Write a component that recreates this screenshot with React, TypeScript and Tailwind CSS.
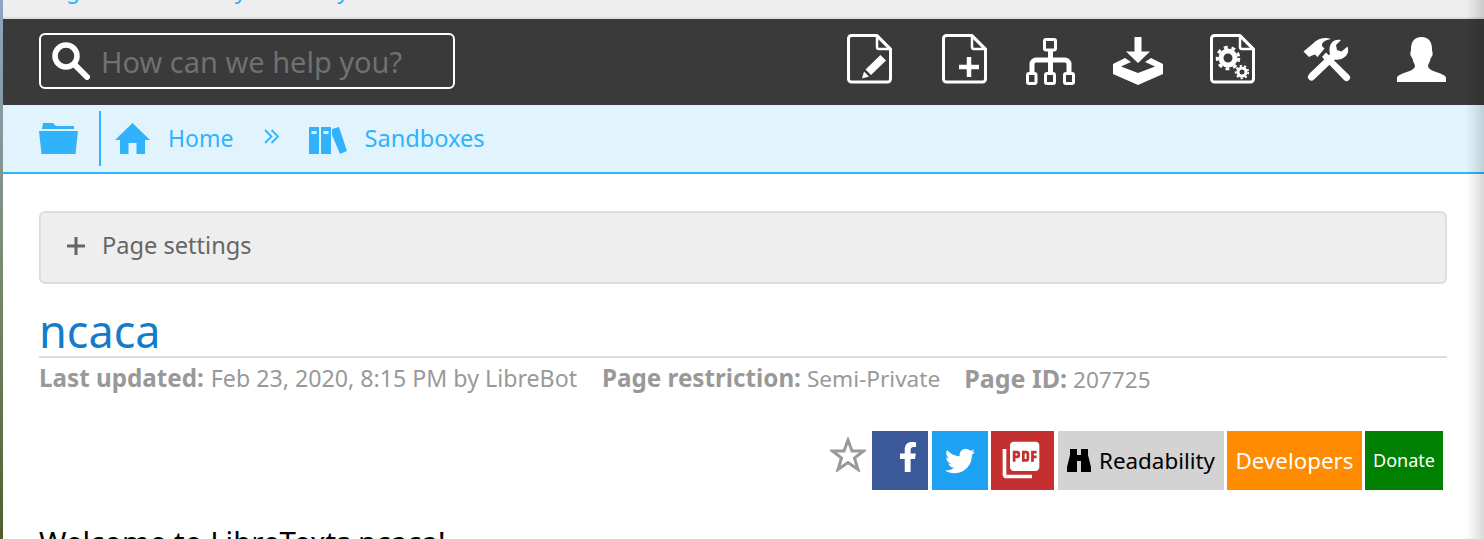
import React from 'react'
import { FaFacebookF, FaTwitter } from 'react-icons/fa'
import { MdPictureAsPdf } from 'react-icons/md'

const DocOutline = () => (
  <>
    <path d="M4 1.5H30L43.5 15V45a3 3 0 0 1-3 3H4.500a3 3 0 0 1-3-3V4.500a3 3 0 0 1 3-3Z" fill="none" stroke="#fff" strokeWidth="3" strokeLinejoin="round" />
    <path d="M30 2V13a2 2 0 0 0 2 2H43Z" fill="none" stroke="#fff" strokeWidth="2.500" strokeLinejoin="round" />
  </>
)

const DocPencil = () => (
  <svg width="45" height="50" viewBox="0 0 45 50">
    <DocOutline />
    <path d="M33.500 21L39 26.500 24 41 18.500 35.500Z" fill="#fff" />
    <path d="M17 37.500L22 42.500 15 44.500Z" fill="#fff" />
  </svg>
)

const DocPlus = () => (
  <svg width="45" height="50" viewBox="0 0 45 50">
    <DocOutline />
    <path d="M27 23V43M17 33H37" stroke="#fff" strokeWidth="4.500" fill="none" />
  </svg>
)

const Sitemap = () => (
  <svg width="49" height="47" viewBox="0 0 49 47" fill="none" stroke="#fff">
    <rect x="18.500" y="1.500" width="11" height="10.500" rx="1.500" strokeWidth="3" />
    <rect x="1.500" y="35.500" width="8.500" height="10" rx="1.500" strokeWidth="3" />
    <rect x="19.500" y="35.500" width="9" height="10" rx="1.500" strokeWidth="3" />
    <rect x="38.500" y="35.500" width="9" height="10" rx="1.500" strokeWidth="3" />
    <path d="M24.500 12V34M6 34V26a4 4 0 0 1 4-4H39a4 4 0 0 1 4 4V34" strokeWidth="5" />
  </svg>
)

const DownloadTray = () => (
  <svg width="50" height="48" viewBox="0 0 50 48" fill="#fff">
    <path d="M21.500 0H28.500V14.500H37L25 26 13 14.500H21.500Z" />
    <path d="M0 27L12 21 18 25 8 29.500 25 36 42 29.500 32 25 38 21 50 27V37L25 48 0 37Z" />
  </svg>
)

const Gear = ({ x, y, r, w }: { x: number; y: number; r: number; w: number }) => (
  <g fill="none" stroke="#fff">
    <circle cx={x} cy={y} r={r} strokeWidth={w} />
    <circle cx={x} cy={y} r={r + w * 0.75} strokeWidth={w * 0.6} strokeDasharray={`${r * 0.55} ${r * 0.55}`} />
  </g>
)

const DocGears = () => (
  <svg width="46" height="50" viewBox="0 0 46 50">
    <DocOutline />
    <Gear x={18} y={24} r={7} w={5} />
    <Gear x={32} y={38} r={4} w={3} />
  </svg>
)

const Tools = () => (
  <svg width="49" height="45" viewBox="0 0 49 45" fill="#fff">
    <path d="M19 20L23 15.500 46 38a3.500 3.500 0 0 1-5 5Z" />
    <path d="M0.500 14.500L10 6.500C15 1 23 0 28 2 22 3 18.500 5.500 19 9L21.500 11.500 14.500 20 12 17.500 9 18.500 6 20Z" />
    <path d="M6 37L27 17C25.500 11 27 6 31.500 3.500 33.500 2.500 36 2.500 38 3L33 8 34 13 38.500 14.500 44.500 9.500C46 14 45 18 41 20.500 38 22.500 35 23 32 22.500L11 42.500a3.500 3.500 0 0 1-5-5Z" />
  </svg>
)

const UserIcon = () => (
  <svg width="49" height="45" viewBox="0 0 49 45" fill="#fff">
    <path d="M24.500 0C32 0 35 5 35 12 35 15 36 15 35.500 18 35 20 34 20 33.500 22 33 25 31 27 31 29 31 32 36 34 42 36 46 37.500 49 39 49 41V45H0V41C0 39 3 37.500 7 36 13 34 18 32 18 29 18 27 16 25 15.500 22 15 20 14 20 13.500 18 13 15 14 15 14 12 14 5 17 0 24.500 0Z" />
  </svg>
)

const SearchIcon = () => (
  <svg width="38" height="38" viewBox="0 0 38 38" fill="none" stroke="#fff">
    <circle cx="14" cy="14" r="11" strokeWidth="5.500" />
    <path d="M23 23L35 35" strokeWidth="6" strokeLinecap="round" />
  </svg>
)

const FolderIcon = () => (
  <svg width="39" height="31" viewBox="0 0 39 31" fill="#30b3fb">
    <path d="M4 0H14L17 3H35V6H3Z" />
    <path d="M0 8H39L36.500 31H2.500Z" />
  </svg>
)

const HomeIcon = () => (
  <svg width="35" height="31" viewBox="0 0 35 31" fill="#30b3fb">
    <path d="M17.500 0L35 17H30V31H21.500V20H13.500V31H5V17H0Z" />
  </svg>
)

const BooksIcon = () => (
  <svg width="38" height="27" viewBox="0 0 38 27" fill="#30b3fb">
    <path d="M0 0H10V27H0ZM2.500 4V7H7.500V4Z" fillRule="evenodd" />
    <path d="M12 0H22V27H12ZM14.500 4V7H19.500V4Z" fillRule="evenodd" />
    <path d="M23 2L30 0 38 24 31 27 23 8Z" />
  </svg>
)

const BinocularsIcon = () => (
  <svg width="24" height="23" viewBox="0 0 24 23" fill="#000">
    <path d="M3 0H10V6H14V0H21V6L24 18V23H14V12H10V23H0V18L3 6Z" />
  </svg>
)

const App: React.FC = () => {
  return (
    <div className="relative flex h-[539px] w-full overflow-hidden bg-white font-['Noto_Sans',sans-serif]">
      {/* borde de la ventana */}
      <div className="w-[3px] shrink-0 bg-linear-to-b from-[#8ea6c6] via-[#7a8a70] to-[#4f5f2c]" />

      <div className="flex min-w-0 flex-1 flex-col">
        {/* barra superior cortada */}
        <div className="h-[19px] shrink-0 overflow-hidden border-b-2 border-[#dddddd] bg-[#eeeeee] pl-[37px]">
          <div className="-mt-[27px] flex text-[23px] leading-[32px] text-[#30b3fb]">
            <span>Log in</span>
            <span className="ml-[65px]">Library</span>
            <span className="ml-[27px]">Library</span>
          </div>
        </div>

        {/* header */}
        <div className="flex h-[86px] shrink-0 items-center bg-[#3a3a3a] pl-[36px]">
          <div className="-mt-[2px] flex h-[56px] w-[416px] items-center rounded-[6px] border-2 border-white pl-[11px]">
            <SearchIcon />
            <span className="ml-[11px] mt-[2px] text-[29px] text-[#707070]">How can we help you?</span>
          </div>
          <div className="ml-[392px] -mt-[6px] flex items-center"><DocPencil /></div>
          <div className="ml-[50px] -mt-[6px] flex items-center"><DocPlus /></div>
          <div className="ml-[39px] -mt-[2px] flex items-center"><Sitemap /></div>
          <div className="ml-[38px] -mt-[3px] flex items-center"><DownloadTray /></div>
          <div className="ml-[47px] -mt-[6px] flex items-center"><DocGears /></div>
          <div className="ml-[47px] -mt-[6px] flex items-center"><Tools /></div>
          <div className="ml-[45px] -mt-[6px] flex items-center"><UserIcon /></div>
        </div>

        {/* breadcrumb */}
        <div className="flex h-[69px] shrink-0 items-center border-b-2 border-[#30b3fb] bg-[#e1f4fe] pl-[36px] text-[#30b3fb]">
          <FolderIcon />
          <div className="ml-[21px] h-[55px] w-[2px] bg-[#30b3fb]" />
          <div className="ml-[14px]"><HomeIcon /></div>
          <span className="ml-[18px] text-[23px]">Home</span>
          <svg className="ml-[31px] -mt-[4px]" width="15" height="15" viewBox="0 0 15 15" fill="none" stroke="#30b3fb" strokeWidth="1.800">
            <path d="M1 1L7.500 7.500 1 14M7.500 1L14 7.500 7.500 14" />
          </svg>
          <div className="ml-[30px] mt-[3px]"><BooksIcon /></div>
          <span className="ml-[17px] text-[23.6px]">Sandboxes</span>
        </div>

        {/* contenido */}
        <div className="flex shrink-0 flex-col pl-[36px] pr-[37px]">
          <div className="mt-[37px] flex h-[73px] items-center rounded-[6px] border-2 border-[#dddddd] bg-[#eeeeee] pl-[26px] text-[#666666]">
            <svg className="-mt-[3px]" width="18" height="18" viewBox="0 0 18 18" stroke="#666666" strokeWidth="3"><path d="M9 0V18M0 9H18" /></svg>
            <span className="ml-[17px] -mt-[4px] text-[23.6px]">Page settings</span>
          </div>

          <h1 className="mt-[21px] border-b-2 border-[#dddddd] text-[45px] leading-[51px] text-[#127bca]">ncaca</h1>

          <div className="mt-[4px] flex text-[23.2px] leading-[32px] text-[#999999]">
            <span><b className="mr-[1px] text-[24.2px]">Last updated:</b> Feb 23, 2020, 8:15 PM by LibreBot</span>
            <span className="ml-[25px]"><b className="text-[24.2px]">Page restriction:</b> <span className="text-[22.6px]">Semi-Private</span></span>
            <span className="ml-[24px]"><b className="text-[25px]">Page ID:</b> <span className="text-[22.6px]">207725</span></span>
          </div>

          <div className="mt-[35px] flex justify-end gap-[3px] pr-[4px] text-[22.4px]">
            <svg className="mr-[3px] mt-[6px]" width="36" height="35" viewBox="0 0 36 35" fill="none" stroke="#999999" strokeWidth="3">
              <path d="M18 3L22 14H33.500L24.500 21 28 32.500 18 25.500 8 32.500 11.500 21 2.500 14H14Z" />
            </svg>
            <div className="flex h-[59px] w-[56px] items-center justify-center bg-[#3b5998] text-white"><FaFacebookF size={30} className="-mt-[8px] ml-[16px]" /></div>
            <div className="ml-[1px] flex h-[59px] w-[56px] items-center justify-center bg-[#1da1f2] text-white"><FaTwitter size={30} /></div>
            <div className="flex h-[59px] w-[63px] items-center justify-center bg-[#c4302f] text-white"><MdPictureAsPdf size={44} className="-ml-[3px] -mt-[2px]" /></div>
            <div className="ml-[1px] flex h-[59px] w-[166px] items-center justify-center gap-[8px] bg-[#d3d3d3] text-black"><BinocularsIcon /><span>Readability</span></div>
            <div className="flex h-[59px] w-[135px] items-center justify-center bg-[#ff8c00] text-white">Developers</div>
            <div className="flex h-[59px] w-[78px] items-center justify-center bg-[#008000] text-[18px] text-white">Donate</div>
          </div>

          <p className="mt-[33px] text-[29.5px] leading-[38px] text-black">Welcome to LibreTexts ncaca!</p>
        </div>
      </div>

      {/* sombra del borde derecho */}
      <div className="pointer-events-none absolute inset-y-0 right-0 w-[18px] bg-linear-to-r from-transparent to-black/15" />
    </div>
  )
}

export default App
